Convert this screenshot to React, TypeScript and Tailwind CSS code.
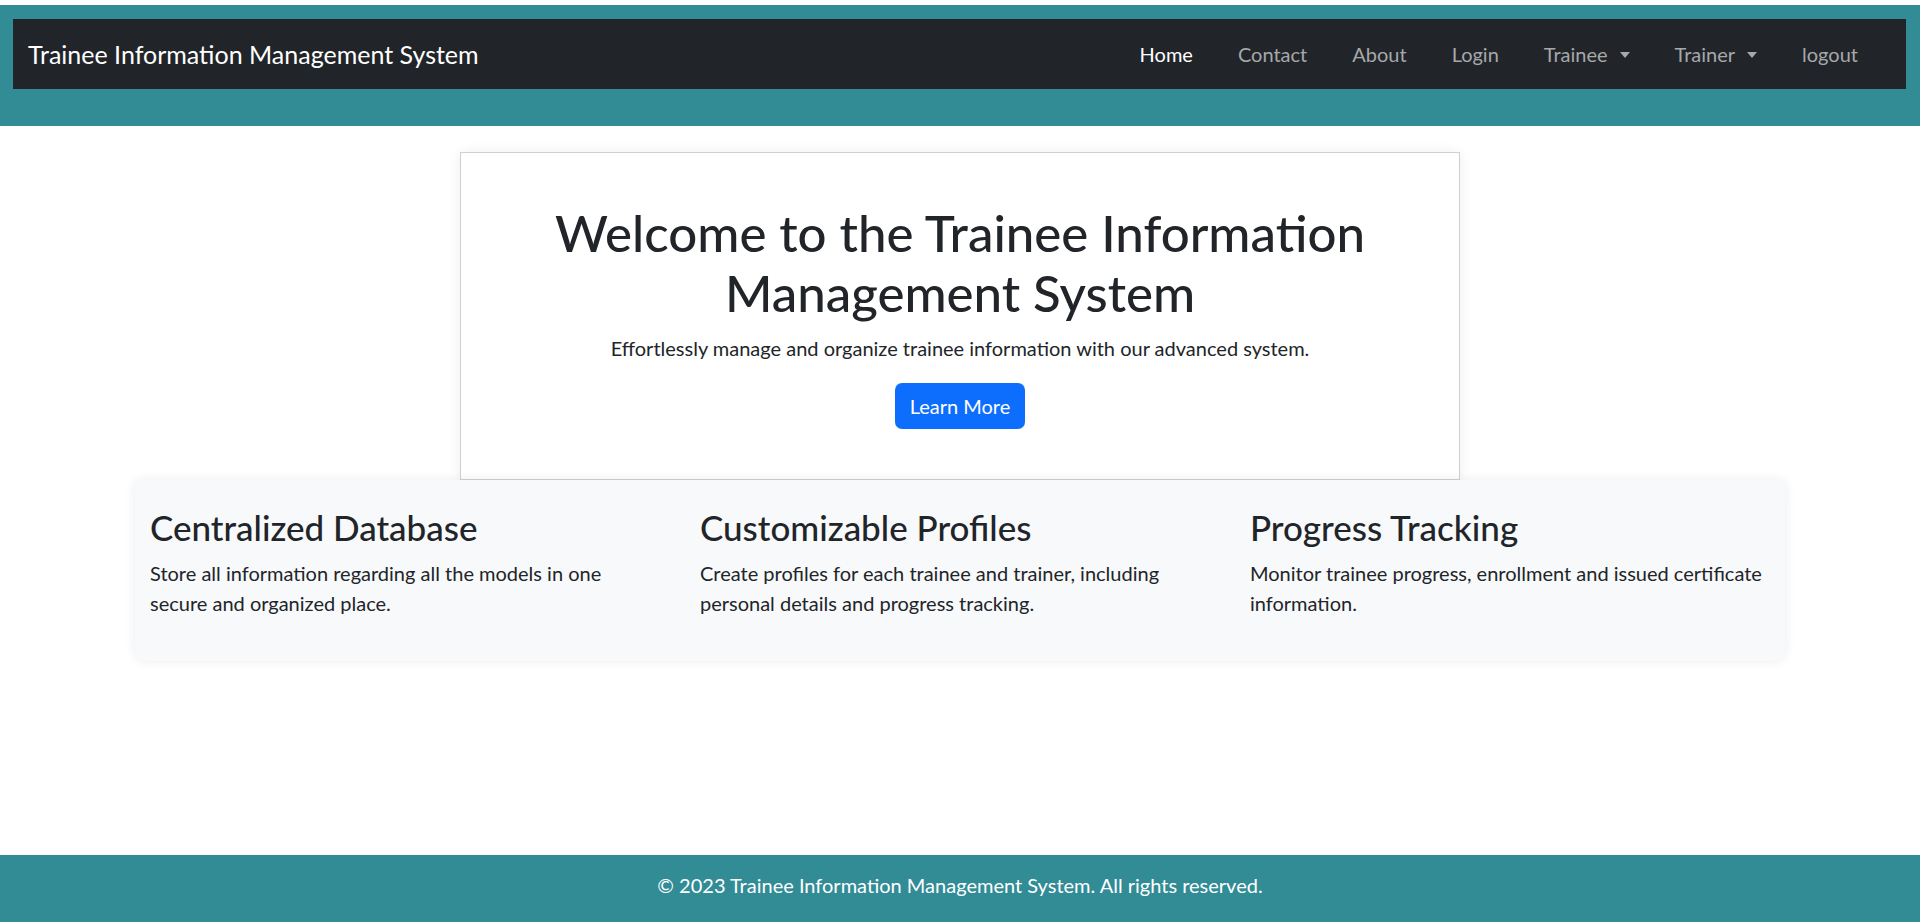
import React from 'react';

const navLinks = [
  { label: 'Home', active: true },
  { label: 'Contact' },
  { label: 'About' },
  { label: 'Login' },
  { label: 'Trainee', dropdown: true },
  { label: 'Trainer', dropdown: true },
  { label: 'logout' },
];

const features = [
  {
    title: 'Centralized Database',
    text: 'Store all information regarding all the models in one secure and organized place.',
    width: 'max-w-[495px]',
  },
  {
    title: 'Customizable Profiles',
    text: 'Create profiles for each trainee and trainer, including personal details and progress tracking.',
    width: '',
  },
  {
    title: 'Progress Tracking',
    text: 'Monitor trainee progress, enrollment and issued certificate information.',
    width: '',
  },
];

// dropdown toggle triangle, like bootstrap's ::after caret
const Caret = () => (
  <span className="ml-[12px] inline-block w-0 h-0 align-[4px] border-x-[5px] border-x-transparent border-t-[6px] border-t-current" />
);

export default function App() {
  return (
    <div className="min-h-[922px] flex flex-col bg-white text-[#212529] font-['Lato',sans-serif]">
      {/* header */}
      <div className="mt-[5px] bg-[#318c96] pt-[14px] pb-[37px]">
        <nav className="ml-[13px] mr-[14px] h-[70px] bg-[#212529] flex items-center justify-between pl-[15px] pr-[48px]">
          <span className="text-[25px] text-white leading-[30px]">Trainee Information Management System</span>
          <ul className="flex items-center gap-[45px] text-[20px] leading-[30px]">
            {navLinks.map(l => (
              <li key={l.label} className={l.active ? 'text-white' : 'text-[#a6a8a9]'}>
                {l.label}
                {l.dropdown && <Caret />}
              </li>
            ))}
          </ul>
        </nav>
      </div>

      <main className="flex-1 flex flex-col items-center">
        {/* hero */}
        <section className="mt-[26px] w-[1000px] border border-[#d0d0d0] bg-white px-[50px] py-[50px] text-center shadow-[0_0_12px_rgba(0,0,0,0.07)]">
          <h1 className="text-[51px] leading-[60px] font-medium mb-[10px]">
            Welcome to the Trainee Information
            <br />
            Management System
          </h1>
          <p className="text-[20px] leading-[30px] mb-[20px]">
            Effortlessly manage and organize trainee information with our advanced system.
          </p>
          <button className="bg-[#0d6efd] text-white text-[20px] leading-[30px] px-[15px] py-[8px] rounded-[7px]">
            Learn More
          </button>
        </section>

        {/* features */}
        <section className="w-[1650px] grid grid-cols-3 bg-[#f8f9fa] rounded-[8px] pt-[26px] pb-[23px] shadow-[0_0_12px_rgba(0,0,0,0.08)]">
          {features.map(f => (
            <div key={f.title} className="px-[15px]">
              <h3 className="text-[35px] leading-[42px] font-medium mb-[10px]">{f.title}</h3>
              <p className={`text-[20px] leading-[30px] mb-[20px] ${f.width}`}>{f.text}</p>
            </div>
          ))}
        </section>
      </main>

      <footer className="bg-[#318c96] text-white text-center text-[20px] leading-[30px] pt-[15px] h-[67px]">
        © 2023 Trainee Information Management System. All rights reserved.
      </footer>
    </div>
  );
}
